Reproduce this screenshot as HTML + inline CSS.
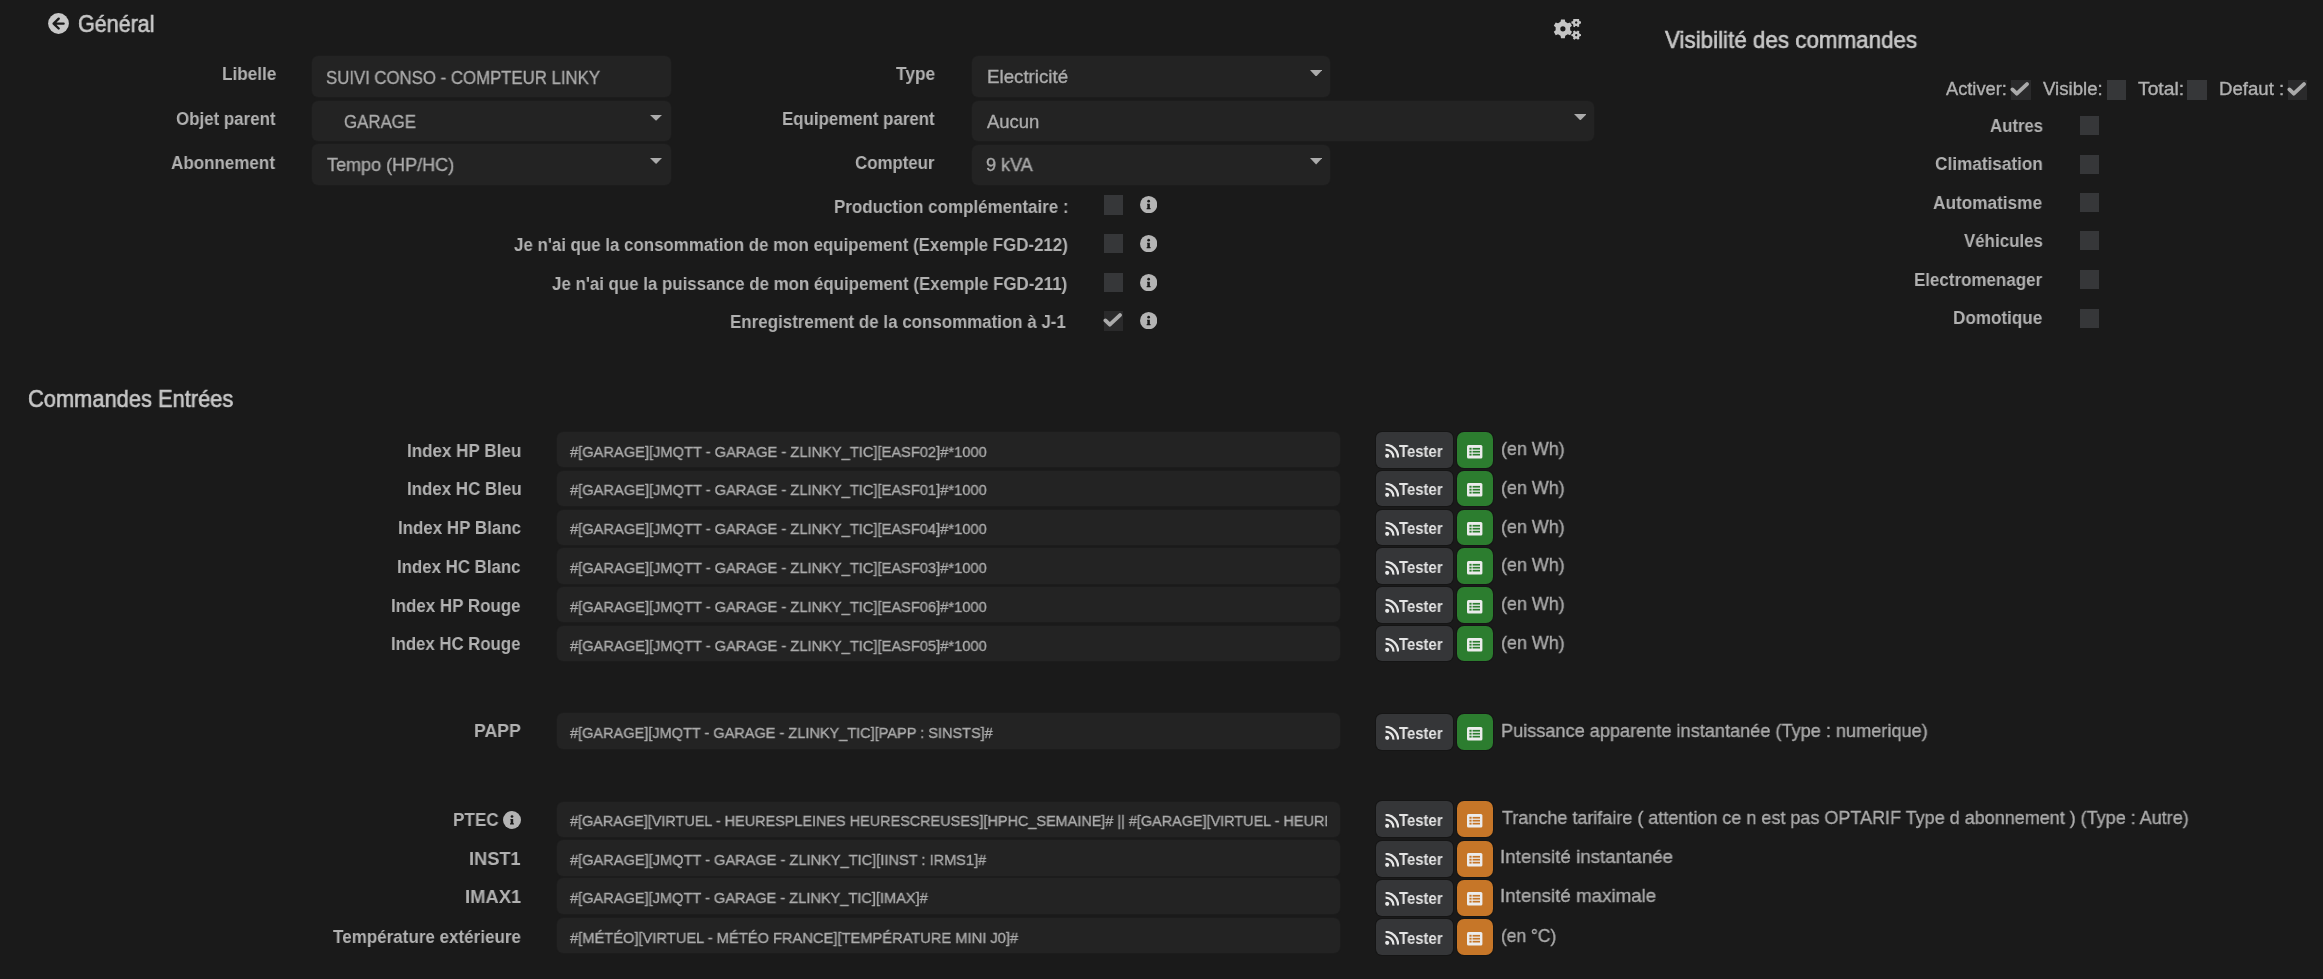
<!DOCTYPE html>
<html><head><meta charset="utf-8"><style>
html,body{margin:0;padding:0;background:#1a1a1a;width:2323px;height:979px;overflow:hidden}
body{position:relative;font-family:"Liberation Sans",sans-serif}
.t{position:absolute;white-space:nowrap;line-height:1;transform-origin:0 0;will-change:transform}
.r{position:absolute;display:block}
.clip{position:absolute;overflow:hidden}
#wrap{position:absolute;left:0;top:0;width:2323px;height:979px}
</style></head><body><div id="wrap">
<svg class="r" style="left:47.70px;top:13.20px" width="21" height="21" viewBox="0 0 21 21"><circle cx="10.5" cy="10.5" r="10.4" fill="#c8c8c8"/><path d="M15.6,10.6 H5.6 M10.7,5.7 L5.6,10.6 L10.7,15.5" fill="none" stroke="#1a1a1a" stroke-width="2.4" stroke-linecap="round" stroke-linejoin="round"/></svg>
<div class="t" style="left:77.72px;top:13.31px;font-size:23.26px;font-weight:normal;color:#c8c8c8;transform:scaleX(0.9248);-webkit-text-stroke:0.6px #c8c8c8">Général</div>
<svg class="r" style="left:1553.00px;top:19.00px" width="30" height="22" viewBox="0 0 30 22"><path d="M7.54,2.79 L8.00,0.39 L11.80,0.39 L12.26,2.79 L14.79,4.25 L17.10,3.45 L19.00,6.74 L17.15,8.34 L17.15,11.26 L19.00,12.86 L17.10,16.15 L14.79,15.35 L12.26,16.81 L11.80,19.21 L8.00,19.21 L7.54,16.81 L5.01,15.35 L2.70,16.15 L0.80,12.86 L2.65,11.26 L2.65,8.34 L0.80,6.74 L2.70,3.45 L5.01,4.25 Z M12.50,9.80 A2.6,2.6 0 1 0 7.30,9.80 A2.6,2.6 0 1 0 12.50,9.80 Z" fill="#c6c6c6" fill-rule="evenodd"/><g transform="rotate(30 23.2 -3.5)"></g><g transform="translate(18.2,-1.5) rotate(30 5 5)"><path d="M3.86,1.48 L4.08,0.19 L5.92,0.19 L6.14,1.48 L7.48,2.25 L8.71,1.80 L9.63,3.39 L8.62,4.23 L8.62,5.77 L9.63,6.61 L8.71,8.20 L7.48,7.75 L6.14,8.52 L5.92,9.81 L4.08,9.81 L3.86,8.52 L2.52,7.75 L1.29,8.20 L0.37,6.61 L1.38,5.77 L1.38,4.23 L0.37,3.39 L1.29,1.80 L2.52,2.25 Z M6.15,5.00 A1.15,1.15 0 1 0 3.85,5.00 A1.15,1.15 0 1 0 6.15,5.00 Z" fill="#c6c6c6" fill-rule="evenodd"/></g><g transform="translate(18.2,11.1) rotate(30 5 5)"><path d="M3.86,1.48 L4.08,0.19 L5.92,0.19 L6.14,1.48 L7.48,2.25 L8.71,1.80 L9.63,3.39 L8.62,4.23 L8.62,5.77 L9.63,6.61 L8.71,8.20 L7.48,7.75 L6.14,8.52 L5.92,9.81 L4.08,9.81 L3.86,8.52 L2.52,7.75 L1.29,8.20 L0.37,6.61 L1.38,5.77 L1.38,4.23 L0.37,3.39 L1.29,1.80 L2.52,2.25 Z M6.15,5.00 A1.15,1.15 0 1 0 3.85,5.00 A1.15,1.15 0 1 0 6.15,5.00 Z" fill="#c6c6c6" fill-rule="evenodd"/></g></svg>
<div class="t" style="left:1664.68px;top:28.51px;font-size:23.26px;font-weight:normal;color:#c8c8c8;transform:scaleX(0.9628);-webkit-text-stroke:0.6px #c8c8c8">Visibilité des commandes</div>
<div class="t" style="left:221.50px;top:64.81px;font-size:18.90px;font-weight:bold;color:#b1b1b1;transform:scaleX(0.9097);-webkit-text-stroke:0.0px #b1b1b1">Libelle</div>
<div class="t" style="left:175.92px;top:109.81px;font-size:18.90px;font-weight:bold;color:#b1b1b1;transform:scaleX(0.8944);-webkit-text-stroke:0.0px #b1b1b1">Objet parent</div>
<div class="t" style="left:171.49px;top:153.81px;font-size:18.90px;font-weight:bold;color:#b1b1b1;transform:scaleX(0.9007);-webkit-text-stroke:0.0px #b1b1b1">Abonnement</div>
<div class="r" style="left:312.00px;top:55.70px;width:359.00px;height:41.10px;background:#232323;border-radius:6px;box-shadow:0 0 0 1px #1c1c1c"></div>
<div class="r" style="left:312.00px;top:100.80px;width:359.00px;height:40.50px;background:#232323;border-radius:6px;box-shadow:0 0 0 1px #1c1c1c"></div>
<div class="r" style="left:312.00px;top:144.20px;width:359.00px;height:40.80px;background:#232323;border-radius:6px;box-shadow:0 0 0 1px #1c1c1c"></div>
<div class="t" style="left:326.16px;top:68.70px;font-size:18.31px;font-weight:normal;color:#ababab;transform:scaleX(0.9168);-webkit-text-stroke:0.35px #ababab">SUIVI CONSO - COMPTEUR LINKY</div>
<div class="t" style="left:343.56px;top:112.50px;font-size:18.31px;font-weight:normal;color:#ababab;transform:scaleX(0.9200);-webkit-text-stroke:0.35px #ababab">GARAGE</div>
<div class="t" style="left:327.14px;top:156.40px;font-size:18.31px;font-weight:normal;color:#ababab;transform:scaleX(0.9855);-webkit-text-stroke:0.35px #ababab">Tempo (HP/HC)</div>
<svg class="r" style="left:649.90px;top:115.00px" width="12.100000000000023" height="5.799999999999997" viewBox="0 0 12.100000000000023 5.799999999999997"><polygon points="0,0 12.100000000000023,0 6.050000000000011,5.799999999999997" fill="#ababab"/></svg>
<svg class="r" style="left:649.90px;top:158.00px" width="12.100000000000023" height="6" viewBox="0 0 12.100000000000023 6"><polygon points="0,0 12.100000000000023,0 6.050000000000011,6" fill="#ababab"/></svg>
<div class="t" style="left:896.43px;top:64.81px;font-size:18.90px;font-weight:bold;color:#b1b1b1;transform:scaleX(0.9148);-webkit-text-stroke:0.0px #b1b1b1">Type</div>
<div class="t" style="left:782.42px;top:110.41px;font-size:18.90px;font-weight:bold;color:#b1b1b1;transform:scaleX(0.8921);-webkit-text-stroke:0.0px #b1b1b1">Equipement parent</div>
<div class="t" style="left:855.43px;top:153.51px;font-size:18.90px;font-weight:bold;color:#b1b1b1;transform:scaleX(0.8919);-webkit-text-stroke:0.0px #b1b1b1">Compteur</div>
<div class="r" style="left:972.30px;top:56.20px;width:357.70px;height:40.40px;background:#232323;border-radius:6px;box-shadow:0 0 0 1px #1c1c1c"></div>
<div class="r" style="left:972.30px;top:100.70px;width:622.00px;height:40.10px;background:#232323;border-radius:6px;box-shadow:0 0 0 1px #1c1c1c"></div>
<div class="r" style="left:972.30px;top:144.60px;width:357.70px;height:40.40px;background:#232323;border-radius:6px;box-shadow:0 0 0 1px #1c1c1c"></div>
<div class="t" style="left:986.50px;top:68.00px;font-size:18.31px;font-weight:normal;color:#ababab;transform:scaleX(1.0220);-webkit-text-stroke:0.35px #ababab">Electricité</div>
<div class="t" style="left:987.00px;top:113.00px;font-size:18.31px;font-weight:normal;color:#ababab;transform:scaleX(1.0093);-webkit-text-stroke:0.35px #ababab">Aucun</div>
<div class="t" style="left:986.10px;top:156.40px;font-size:18.31px;font-weight:normal;color:#ababab;transform:scaleX(0.9846);-webkit-text-stroke:0.35px #ababab">9 kVA</div>
<svg class="r" style="left:1309.70px;top:69.60px" width="12.200000000000045" height="6.6000000000000085" viewBox="0 0 12.200000000000045 6.6000000000000085"><polygon points="0,0 12.200000000000045,0 6.100000000000023,6.6000000000000085" fill="#ababab"/></svg>
<svg class="r" style="left:1573.70px;top:113.60px" width="12.700000000000045" height="6.400000000000006" viewBox="0 0 12.700000000000045 6.400000000000006"><polygon points="0,0 12.700000000000045,0 6.350000000000023,6.400000000000006" fill="#ababab"/></svg>
<svg class="r" style="left:1309.70px;top:158.00px" width="12.200000000000045" height="6.5" viewBox="0 0 12.200000000000045 6.5"><polygon points="0,0 12.200000000000045,0 6.100000000000023,6.5" fill="#ababab"/></svg>
<div class="t" style="left:833.71px;top:196.76px;font-size:19.19px;font-weight:bold;color:#b1b1b1;transform:scaleX(0.8838);-webkit-text-stroke:0.0px #b1b1b1">Production complémentaire :</div>
<div class="r" style="left:1104.00px;top:195.00px;width:19.00px;height:19.60px;background:#363739;border-radius:0px;"></div>
<svg class="r" style="left:1140.04px;top:195.94px" width="17.32" height="17.32" viewBox="0 0 17.32 17.32"><circle cx="8.66" cy="8.66" r="8.66" fill="#b4b4b4"/><circle cx="8.66" cy="5.16" r="1.35" fill="#1a1a1a"/><path d="M7.0600000000000005,7.66 h2.8 v4.3 h0.7 v1.2 h-3.9 v-1.2 h0.7 v-3.1 h-0.3 z" fill="#1a1a1a"/></svg>
<div class="t" style="left:513.76px;top:234.86px;font-size:19.19px;font-weight:bold;color:#b1b1b1;transform:scaleX(0.8800);-webkit-text-stroke:0.0px #b1b1b1">Je n'ai que la consommation de mon equipement (Exemple FGD-212)</div>
<div class="r" style="left:1104.00px;top:233.80px;width:19.00px;height:19.60px;background:#363739;border-radius:0px;"></div>
<svg class="r" style="left:1140.04px;top:234.74px" width="17.32" height="17.32" viewBox="0 0 17.32 17.32"><circle cx="8.66" cy="8.66" r="8.66" fill="#b4b4b4"/><circle cx="8.66" cy="5.16" r="1.35" fill="#1a1a1a"/><path d="M7.0600000000000005,7.66 h2.8 v4.3 h0.7 v1.2 h-3.9 v-1.2 h0.7 v-3.1 h-0.3 z" fill="#1a1a1a"/></svg>
<div class="t" style="left:552.46px;top:273.56px;font-size:19.19px;font-weight:bold;color:#b1b1b1;transform:scaleX(0.8796);-webkit-text-stroke:0.0px #b1b1b1">Je n'ai que la puissance de mon équipement (Exemple FGD-211)</div>
<div class="r" style="left:1104.00px;top:272.60px;width:19.00px;height:19.60px;background:#363739;border-radius:0px;"></div>
<svg class="r" style="left:1140.04px;top:273.54px" width="17.32" height="17.32" viewBox="0 0 17.32 17.32"><circle cx="8.66" cy="8.66" r="8.66" fill="#b4b4b4"/><circle cx="8.66" cy="5.16" r="1.35" fill="#1a1a1a"/><path d="M7.0600000000000005,7.66 h2.8 v4.3 h0.7 v1.2 h-3.9 v-1.2 h0.7 v-3.1 h-0.3 z" fill="#1a1a1a"/></svg>
<div class="t" style="left:729.81px;top:311.76px;font-size:19.19px;font-weight:bold;color:#b1b1b1;transform:scaleX(0.8824);-webkit-text-stroke:0.0px #b1b1b1">Enregistrement de la consommation à J-1</div>
<div class="r" style="left:1104.00px;top:311.00px;width:19.00px;height:19.60px;background:#2a2a2b;border-radius:0px;"></div>
<svg class="r" style="left:1103.00px;top:311.00px" width="21" height="19.6" viewBox="0 0 21 19.6"><polyline points="2.4,9.4 6.8,13.7 17,4.1" fill="none" stroke="#ababab" stroke-width="3.8" stroke-linecap="round" stroke-linejoin="round"/></svg>
<svg class="r" style="left:1140.04px;top:311.94px" width="17.32" height="17.32" viewBox="0 0 17.32 17.32"><circle cx="8.66" cy="8.66" r="8.66" fill="#b4b4b4"/><circle cx="8.66" cy="5.16" r="1.35" fill="#1a1a1a"/><path d="M7.0600000000000005,7.66 h2.8 v4.3 h0.7 v1.2 h-3.9 v-1.2 h0.7 v-3.1 h-0.3 z" fill="#1a1a1a"/></svg>
<div class="t" style="left:1946.00px;top:79.74px;font-size:18.02px;font-weight:normal;color:#b1b1b1;transform:scaleX(1.0124);-webkit-text-stroke:0.35px #b1b1b1">Activer:</div>
<div class="t" style="left:2042.81px;top:79.74px;font-size:18.02px;font-weight:normal;color:#b1b1b1;transform:scaleX(1.0347);-webkit-text-stroke:0.35px #b1b1b1">Visible:</div>
<div class="t" style="left:2137.61px;top:79.74px;font-size:18.02px;font-weight:normal;color:#b1b1b1;transform:scaleX(1.0707);-webkit-text-stroke:0.35px #b1b1b1">Total:</div>
<div class="t" style="left:2218.51px;top:79.74px;font-size:18.02px;font-weight:normal;color:#b1b1b1;transform:scaleX(1.0330);-webkit-text-stroke:0.35px #b1b1b1">Defaut :</div>
<div class="r" style="left:2011.00px;top:80.00px;width:19.50px;height:19.50px;background:#2a2a2b;border-radius:0px;"></div>
<svg class="r" style="left:2010.00px;top:80.00px" width="21.5" height="19.5" viewBox="0 0 21.5 19.5"><polyline points="2.4,9.4 6.8,13.7 17,4.1" fill="none" stroke="#ababab" stroke-width="3.8" stroke-linecap="round" stroke-linejoin="round"/></svg>
<div class="r" style="left:2106.50px;top:80.00px;width:19.50px;height:19.50px;background:#363739;border-radius:0px;"></div>
<div class="r" style="left:2187.00px;top:80.00px;width:19.50px;height:19.50px;background:#363739;border-radius:0px;"></div>
<div class="r" style="left:2287.50px;top:80.00px;width:19.50px;height:19.50px;background:#2a2a2b;border-radius:0px;"></div>
<svg class="r" style="left:2286.50px;top:80.00px" width="21.5" height="19.5" viewBox="0 0 21.5 19.5"><polyline points="2.4,9.4 6.8,13.7 17,4.1" fill="none" stroke="#ababab" stroke-width="3.8" stroke-linecap="round" stroke-linejoin="round"/></svg>
<div class="t" style="left:1989.50px;top:116.61px;font-size:18.90px;font-weight:bold;color:#b1b1b1;transform:scaleX(0.8877);-webkit-text-stroke:0.0px #b1b1b1">Autres</div>
<div class="r" style="left:2079.70px;top:116.00px;width:19.00px;height:19.00px;background:#363739;border-radius:0px;"></div>
<div class="t" style="left:1935.11px;top:154.81px;font-size:18.90px;font-weight:bold;color:#b1b1b1;transform:scaleX(0.9095);-webkit-text-stroke:0.0px #b1b1b1">Climatisation</div>
<div class="r" style="left:2079.70px;top:154.80px;width:19.00px;height:19.00px;background:#363739;border-radius:0px;"></div>
<div class="t" style="left:1933.48px;top:193.71px;font-size:18.90px;font-weight:bold;color:#b1b1b1;transform:scaleX(0.9116);-webkit-text-stroke:0.0px #b1b1b1">Automatisme</div>
<div class="r" style="left:2079.70px;top:193.00px;width:19.00px;height:19.00px;background:#363739;border-radius:0px;"></div>
<div class="t" style="left:1963.83px;top:232.01px;font-size:18.90px;font-weight:bold;color:#b1b1b1;transform:scaleX(0.8935);-webkit-text-stroke:0.0px #b1b1b1">Véhicules</div>
<div class="r" style="left:2079.70px;top:231.30px;width:19.00px;height:19.00px;background:#363739;border-radius:0px;"></div>
<div class="t" style="left:1914.01px;top:271.01px;font-size:18.90px;font-weight:bold;color:#b1b1b1;transform:scaleX(0.8971);-webkit-text-stroke:0.0px #b1b1b1">Electromenager</div>
<div class="r" style="left:2079.70px;top:270.00px;width:19.00px;height:19.00px;background:#363739;border-radius:0px;"></div>
<div class="t" style="left:1953.30px;top:309.01px;font-size:18.90px;font-weight:bold;color:#b1b1b1;transform:scaleX(0.9044);-webkit-text-stroke:0.0px #b1b1b1">Domotique</div>
<div class="r" style="left:2079.70px;top:308.50px;width:19.00px;height:19.00px;background:#363739;border-radius:0px;"></div>
<div class="t" style="left:28.31px;top:388.41px;font-size:23.26px;font-weight:normal;color:#c8c8c8;transform:scaleX(0.9400);-webkit-text-stroke:0.6px #c8c8c8">Commandes Entrées</div>
<div class="r" style="left:557.00px;top:432.00px;width:782.60px;height:35.40px;background:#232323;border-radius:6px;box-shadow:0 0 0 1px #1c1c1c"></div>
<div class="t" style="left:407.21px;top:441.61px;font-size:18.90px;font-weight:bold;color:#b1b1b1;transform:scaleX(0.9014);-webkit-text-stroke:0.0px #b1b1b1">Index HP Bleu</div>
<div class="t" style="left:569.50px;top:443.88px;font-size:15.26px;font-weight:normal;color:#ababab;transform:scaleX(0.9609);-webkit-text-stroke:0.35px #ababab">#[GARAGE][JMQTT - GARAGE - ZLINKY_TIC][EASF02]#*1000</div>
<div class="r" style="left:1376.20px;top:432.00px;width:76.50px;height:35.60px;background:#353638;border-radius:6px;box-shadow:0 0 0 1px #151515"></div>
<svg class="r" style="left:1385.00px;top:444.30px" width="14" height="14" viewBox="0 0 14 14"><circle cx="2.2" cy="11.8" r="2.1" fill="#e6e6e6"/><path d="M0.6,5.6 A7.6,7.6 0 0 1 8.4,13.6" fill="none" stroke="#e6e6e6" stroke-width="2.3"/><path d="M0.6,0.9 A12.5,12.5 0 0 1 13.1,13.6" fill="none" stroke="#e6e6e6" stroke-width="2.3"/></svg>
<div class="t" style="left:1398.95px;top:443.69px;font-size:15.84px;font-weight:bold;color:#e4e4e4;transform:scaleX(0.9414);-webkit-text-stroke:0.0px #e4e4e4">Tester</div>
<div class="r" style="left:1457.20px;top:432.00px;width:35.40px;height:35.60px;background:#2c7d2f;border-radius:7px;box-shadow:0 0 0 1px #151515"></div>
<svg class="r" style="left:1467.10px;top:444.60px" width="16" height="14" viewBox="0 0 16 14"><rect x="0" y="0" width="15.4" height="13.4" rx="1.5" fill="#ececec"/><rect x="2.4" y="2.8" width="2.2" height="1.9" fill="#2c7d2f"/><rect x="2.4" y="5.75" width="2.2" height="1.9" fill="#2c7d2f"/><rect x="2.4" y="8.7" width="2.2" height="1.9" fill="#2c7d2f"/><rect x="5.6" y="2.9" width="7.4" height="1.7" fill="#2c7d2f"/><rect x="5.6" y="5.85" width="7.4" height="1.7" fill="#2c7d2f"/><rect x="5.6" y="8.8" width="7.4" height="1.7" fill="#2c7d2f"/></svg>
<div class="t" style="left:1500.92px;top:439.18px;font-size:19.04px;font-weight:normal;color:#ababab;transform:scaleX(0.9417);-webkit-text-stroke:0.35px #ababab">(en Wh)</div>
<div class="r" style="left:557.00px;top:470.60px;width:782.60px;height:35.40px;background:#232323;border-radius:6px;box-shadow:0 0 0 1px #1c1c1c"></div>
<div class="t" style="left:406.62px;top:480.21px;font-size:18.90px;font-weight:bold;color:#b1b1b1;transform:scaleX(0.8953);-webkit-text-stroke:0.0px #b1b1b1">Index HC Bleu</div>
<div class="t" style="left:569.50px;top:482.48px;font-size:15.26px;font-weight:normal;color:#ababab;transform:scaleX(0.9609);-webkit-text-stroke:0.35px #ababab">#[GARAGE][JMQTT - GARAGE - ZLINKY_TIC][EASF01]#*1000</div>
<div class="r" style="left:1376.20px;top:470.60px;width:76.50px;height:35.60px;background:#353638;border-radius:6px;box-shadow:0 0 0 1px #151515"></div>
<svg class="r" style="left:1385.00px;top:482.90px" width="14" height="14" viewBox="0 0 14 14"><circle cx="2.2" cy="11.8" r="2.1" fill="#e6e6e6"/><path d="M0.6,5.6 A7.6,7.6 0 0 1 8.4,13.6" fill="none" stroke="#e6e6e6" stroke-width="2.3"/><path d="M0.6,0.9 A12.5,12.5 0 0 1 13.1,13.6" fill="none" stroke="#e6e6e6" stroke-width="2.3"/></svg>
<div class="t" style="left:1398.95px;top:482.29px;font-size:15.84px;font-weight:bold;color:#e4e4e4;transform:scaleX(0.9414);-webkit-text-stroke:0.0px #e4e4e4">Tester</div>
<div class="r" style="left:1457.20px;top:470.60px;width:35.40px;height:35.60px;background:#2c7d2f;border-radius:7px;box-shadow:0 0 0 1px #151515"></div>
<svg class="r" style="left:1467.10px;top:483.20px" width="16" height="14" viewBox="0 0 16 14"><rect x="0" y="0" width="15.4" height="13.4" rx="1.5" fill="#ececec"/><rect x="2.4" y="2.8" width="2.2" height="1.9" fill="#2c7d2f"/><rect x="2.4" y="5.75" width="2.2" height="1.9" fill="#2c7d2f"/><rect x="2.4" y="8.7" width="2.2" height="1.9" fill="#2c7d2f"/><rect x="5.6" y="2.9" width="7.4" height="1.7" fill="#2c7d2f"/><rect x="5.6" y="5.85" width="7.4" height="1.7" fill="#2c7d2f"/><rect x="5.6" y="8.8" width="7.4" height="1.7" fill="#2c7d2f"/></svg>
<div class="t" style="left:1500.92px;top:477.78px;font-size:19.04px;font-weight:normal;color:#ababab;transform:scaleX(0.9417);-webkit-text-stroke:0.35px #ababab">(en Wh)</div>
<div class="r" style="left:557.00px;top:509.50px;width:782.60px;height:35.40px;background:#232323;border-radius:6px;box-shadow:0 0 0 1px #1c1c1c"></div>
<div class="t" style="left:397.71px;top:519.11px;font-size:18.90px;font-weight:bold;color:#b1b1b1;transform:scaleX(0.8961);-webkit-text-stroke:0.0px #b1b1b1">Index HP Blanc</div>
<div class="t" style="left:569.50px;top:521.38px;font-size:15.26px;font-weight:normal;color:#ababab;transform:scaleX(0.9609);-webkit-text-stroke:0.35px #ababab">#[GARAGE][JMQTT - GARAGE - ZLINKY_TIC][EASF04]#*1000</div>
<div class="r" style="left:1376.20px;top:509.50px;width:76.50px;height:35.60px;background:#353638;border-radius:6px;box-shadow:0 0 0 1px #151515"></div>
<svg class="r" style="left:1385.00px;top:521.80px" width="14" height="14" viewBox="0 0 14 14"><circle cx="2.2" cy="11.8" r="2.1" fill="#e6e6e6"/><path d="M0.6,5.6 A7.6,7.6 0 0 1 8.4,13.6" fill="none" stroke="#e6e6e6" stroke-width="2.3"/><path d="M0.6,0.9 A12.5,12.5 0 0 1 13.1,13.6" fill="none" stroke="#e6e6e6" stroke-width="2.3"/></svg>
<div class="t" style="left:1398.95px;top:521.19px;font-size:15.84px;font-weight:bold;color:#e4e4e4;transform:scaleX(0.9414);-webkit-text-stroke:0.0px #e4e4e4">Tester</div>
<div class="r" style="left:1457.20px;top:509.50px;width:35.40px;height:35.60px;background:#2c7d2f;border-radius:7px;box-shadow:0 0 0 1px #151515"></div>
<svg class="r" style="left:1467.10px;top:522.10px" width="16" height="14" viewBox="0 0 16 14"><rect x="0" y="0" width="15.4" height="13.4" rx="1.5" fill="#ececec"/><rect x="2.4" y="2.8" width="2.2" height="1.9" fill="#2c7d2f"/><rect x="2.4" y="5.75" width="2.2" height="1.9" fill="#2c7d2f"/><rect x="2.4" y="8.7" width="2.2" height="1.9" fill="#2c7d2f"/><rect x="5.6" y="2.9" width="7.4" height="1.7" fill="#2c7d2f"/><rect x="5.6" y="5.85" width="7.4" height="1.7" fill="#2c7d2f"/><rect x="5.6" y="8.8" width="7.4" height="1.7" fill="#2c7d2f"/></svg>
<div class="t" style="left:1500.92px;top:516.68px;font-size:19.04px;font-weight:normal;color:#ababab;transform:scaleX(0.9417);-webkit-text-stroke:0.35px #ababab">(en Wh)</div>
<div class="r" style="left:557.00px;top:548.30px;width:782.60px;height:35.40px;background:#232323;border-radius:6px;box-shadow:0 0 0 1px #1c1c1c"></div>
<div class="t" style="left:397.12px;top:557.91px;font-size:18.90px;font-weight:bold;color:#b1b1b1;transform:scaleX(0.8918);-webkit-text-stroke:0.0px #b1b1b1">Index HC Blanc</div>
<div class="t" style="left:569.50px;top:560.18px;font-size:15.26px;font-weight:normal;color:#ababab;transform:scaleX(0.9609);-webkit-text-stroke:0.35px #ababab">#[GARAGE][JMQTT - GARAGE - ZLINKY_TIC][EASF03]#*1000</div>
<div class="r" style="left:1376.20px;top:548.30px;width:76.50px;height:35.60px;background:#353638;border-radius:6px;box-shadow:0 0 0 1px #151515"></div>
<svg class="r" style="left:1385.00px;top:560.60px" width="14" height="14" viewBox="0 0 14 14"><circle cx="2.2" cy="11.8" r="2.1" fill="#e6e6e6"/><path d="M0.6,5.6 A7.6,7.6 0 0 1 8.4,13.6" fill="none" stroke="#e6e6e6" stroke-width="2.3"/><path d="M0.6,0.9 A12.5,12.5 0 0 1 13.1,13.6" fill="none" stroke="#e6e6e6" stroke-width="2.3"/></svg>
<div class="t" style="left:1398.95px;top:559.99px;font-size:15.84px;font-weight:bold;color:#e4e4e4;transform:scaleX(0.9414);-webkit-text-stroke:0.0px #e4e4e4">Tester</div>
<div class="r" style="left:1457.20px;top:548.30px;width:35.40px;height:35.60px;background:#2c7d2f;border-radius:7px;box-shadow:0 0 0 1px #151515"></div>
<svg class="r" style="left:1467.10px;top:560.90px" width="16" height="14" viewBox="0 0 16 14"><rect x="0" y="0" width="15.4" height="13.4" rx="1.5" fill="#ececec"/><rect x="2.4" y="2.8" width="2.2" height="1.9" fill="#2c7d2f"/><rect x="2.4" y="5.75" width="2.2" height="1.9" fill="#2c7d2f"/><rect x="2.4" y="8.7" width="2.2" height="1.9" fill="#2c7d2f"/><rect x="5.6" y="2.9" width="7.4" height="1.7" fill="#2c7d2f"/><rect x="5.6" y="5.85" width="7.4" height="1.7" fill="#2c7d2f"/><rect x="5.6" y="8.8" width="7.4" height="1.7" fill="#2c7d2f"/></svg>
<div class="t" style="left:1500.92px;top:555.48px;font-size:19.04px;font-weight:normal;color:#ababab;transform:scaleX(0.9417);-webkit-text-stroke:0.35px #ababab">(en Wh)</div>
<div class="r" style="left:557.00px;top:587.10px;width:782.60px;height:35.40px;background:#232323;border-radius:6px;box-shadow:0 0 0 1px #1c1c1c"></div>
<div class="t" style="left:391.41px;top:596.71px;font-size:18.90px;font-weight:bold;color:#b1b1b1;transform:scaleX(0.8963);-webkit-text-stroke:0.0px #b1b1b1">Index HP Rouge</div>
<div class="t" style="left:569.50px;top:598.98px;font-size:15.26px;font-weight:normal;color:#ababab;transform:scaleX(0.9609);-webkit-text-stroke:0.35px #ababab">#[GARAGE][JMQTT - GARAGE - ZLINKY_TIC][EASF06]#*1000</div>
<div class="r" style="left:1376.20px;top:587.10px;width:76.50px;height:35.60px;background:#353638;border-radius:6px;box-shadow:0 0 0 1px #151515"></div>
<svg class="r" style="left:1385.00px;top:599.40px" width="14" height="14" viewBox="0 0 14 14"><circle cx="2.2" cy="11.8" r="2.1" fill="#e6e6e6"/><path d="M0.6,5.6 A7.6,7.6 0 0 1 8.4,13.6" fill="none" stroke="#e6e6e6" stroke-width="2.3"/><path d="M0.6,0.9 A12.5,12.5 0 0 1 13.1,13.6" fill="none" stroke="#e6e6e6" stroke-width="2.3"/></svg>
<div class="t" style="left:1398.95px;top:598.79px;font-size:15.84px;font-weight:bold;color:#e4e4e4;transform:scaleX(0.9414);-webkit-text-stroke:0.0px #e4e4e4">Tester</div>
<div class="r" style="left:1457.20px;top:587.10px;width:35.40px;height:35.60px;background:#2c7d2f;border-radius:7px;box-shadow:0 0 0 1px #151515"></div>
<svg class="r" style="left:1467.10px;top:599.70px" width="16" height="14" viewBox="0 0 16 14"><rect x="0" y="0" width="15.4" height="13.4" rx="1.5" fill="#ececec"/><rect x="2.4" y="2.8" width="2.2" height="1.9" fill="#2c7d2f"/><rect x="2.4" y="5.75" width="2.2" height="1.9" fill="#2c7d2f"/><rect x="2.4" y="8.7" width="2.2" height="1.9" fill="#2c7d2f"/><rect x="5.6" y="2.9" width="7.4" height="1.7" fill="#2c7d2f"/><rect x="5.6" y="5.85" width="7.4" height="1.7" fill="#2c7d2f"/><rect x="5.6" y="8.8" width="7.4" height="1.7" fill="#2c7d2f"/></svg>
<div class="t" style="left:1500.92px;top:594.28px;font-size:19.04px;font-weight:normal;color:#ababab;transform:scaleX(0.9417);-webkit-text-stroke:0.35px #ababab">(en Wh)</div>
<div class="r" style="left:557.00px;top:625.80px;width:782.60px;height:35.40px;background:#232323;border-radius:6px;box-shadow:0 0 0 1px #1c1c1c"></div>
<div class="t" style="left:391.43px;top:635.41px;font-size:18.90px;font-weight:bold;color:#b1b1b1;transform:scaleX(0.8869);-webkit-text-stroke:0.0px #b1b1b1">Index HC Rouge</div>
<div class="t" style="left:569.50px;top:637.68px;font-size:15.26px;font-weight:normal;color:#ababab;transform:scaleX(0.9609);-webkit-text-stroke:0.35px #ababab">#[GARAGE][JMQTT - GARAGE - ZLINKY_TIC][EASF05]#*1000</div>
<div class="r" style="left:1376.20px;top:625.80px;width:76.50px;height:35.60px;background:#353638;border-radius:6px;box-shadow:0 0 0 1px #151515"></div>
<svg class="r" style="left:1385.00px;top:638.10px" width="14" height="14" viewBox="0 0 14 14"><circle cx="2.2" cy="11.8" r="2.1" fill="#e6e6e6"/><path d="M0.6,5.6 A7.6,7.6 0 0 1 8.4,13.6" fill="none" stroke="#e6e6e6" stroke-width="2.3"/><path d="M0.6,0.9 A12.5,12.5 0 0 1 13.1,13.6" fill="none" stroke="#e6e6e6" stroke-width="2.3"/></svg>
<div class="t" style="left:1398.95px;top:637.49px;font-size:15.84px;font-weight:bold;color:#e4e4e4;transform:scaleX(0.9414);-webkit-text-stroke:0.0px #e4e4e4">Tester</div>
<div class="r" style="left:1457.20px;top:625.80px;width:35.40px;height:35.60px;background:#2c7d2f;border-radius:7px;box-shadow:0 0 0 1px #151515"></div>
<svg class="r" style="left:1467.10px;top:638.40px" width="16" height="14" viewBox="0 0 16 14"><rect x="0" y="0" width="15.4" height="13.4" rx="1.5" fill="#ececec"/><rect x="2.4" y="2.8" width="2.2" height="1.9" fill="#2c7d2f"/><rect x="2.4" y="5.75" width="2.2" height="1.9" fill="#2c7d2f"/><rect x="2.4" y="8.7" width="2.2" height="1.9" fill="#2c7d2f"/><rect x="5.6" y="2.9" width="7.4" height="1.7" fill="#2c7d2f"/><rect x="5.6" y="5.85" width="7.4" height="1.7" fill="#2c7d2f"/><rect x="5.6" y="8.8" width="7.4" height="1.7" fill="#2c7d2f"/></svg>
<div class="t" style="left:1500.92px;top:632.98px;font-size:19.04px;font-weight:normal;color:#ababab;transform:scaleX(0.9417);-webkit-text-stroke:0.35px #ababab">(en Wh)</div>
<div class="r" style="left:557.00px;top:713.20px;width:782.60px;height:35.80px;background:#232323;border-radius:6px;box-shadow:0 0 0 1px #1c1c1c"></div>
<div class="t" style="left:474.16px;top:722.31px;font-size:18.90px;font-weight:bold;color:#b1b1b1;transform:scaleX(0.9355);-webkit-text-stroke:0.0px #b1b1b1">PAPP</div>
<div class="t" style="left:569.50px;top:724.98px;font-size:15.26px;font-weight:normal;color:#ababab;transform:scaleX(0.9521);-webkit-text-stroke:0.35px #ababab">#[GARAGE][JMQTT - GARAGE - ZLINKY_TIC][PAPP : SINSTS]#</div>
<div class="r" style="left:1376.20px;top:714.10px;width:76.50px;height:36.00px;background:#353638;border-radius:6px;box-shadow:0 0 0 1px #151515"></div>
<svg class="r" style="left:1385.00px;top:726.40px" width="14" height="14" viewBox="0 0 14 14"><circle cx="2.2" cy="11.8" r="2.1" fill="#e6e6e6"/><path d="M0.6,5.6 A7.6,7.6 0 0 1 8.4,13.6" fill="none" stroke="#e6e6e6" stroke-width="2.3"/><path d="M0.6,0.9 A12.5,12.5 0 0 1 13.1,13.6" fill="none" stroke="#e6e6e6" stroke-width="2.3"/></svg>
<div class="t" style="left:1398.95px;top:725.79px;font-size:15.84px;font-weight:bold;color:#e4e4e4;transform:scaleX(0.9414);-webkit-text-stroke:0.0px #e4e4e4">Tester</div>
<div class="r" style="left:1457.20px;top:714.10px;width:35.40px;height:36.00px;background:#2c7d2f;border-radius:7px;box-shadow:0 0 0 1px #151515"></div>
<svg class="r" style="left:1467.10px;top:726.70px" width="16" height="14" viewBox="0 0 16 14"><rect x="0" y="0" width="15.4" height="13.4" rx="1.5" fill="#ececec"/><rect x="2.4" y="2.8" width="2.2" height="1.9" fill="#2c7d2f"/><rect x="2.4" y="5.75" width="2.2" height="1.9" fill="#2c7d2f"/><rect x="2.4" y="8.7" width="2.2" height="1.9" fill="#2c7d2f"/><rect x="5.6" y="2.9" width="7.4" height="1.7" fill="#2c7d2f"/><rect x="5.6" y="5.85" width="7.4" height="1.7" fill="#2c7d2f"/><rect x="5.6" y="8.8" width="7.4" height="1.7" fill="#2c7d2f"/></svg>
<div class="t" style="left:1500.55px;top:721.28px;font-size:19.04px;font-weight:normal;color:#ababab;transform:scaleX(0.9535);-webkit-text-stroke:0.35px #ababab">Puissance apparente instantanée (Type : numerique)</div>
<div class="r" style="left:557.00px;top:801.50px;width:782.60px;height:35.80px;background:#232323;border-radius:6px;box-shadow:0 0 0 1px #1c1c1c"></div>
<div class="t" style="left:452.50px;top:811.21px;font-size:18.90px;font-weight:bold;color:#b1b1b1;transform:scaleX(0.9055);-webkit-text-stroke:0.0px #b1b1b1">PTEC</div>
<svg class="r" style="left:502.60px;top:810.50px" width="18" height="18" viewBox="0 0 18 18"><circle cx="9" cy="9" r="9" fill="#b4b4b4"/><circle cx="9" cy="5.5" r="1.35" fill="#1a1a1a"/><path d="M7.4,8.0 h2.8 v4.3 h0.7 v1.2 h-3.9 v-1.2 h0.7 v-3.1 h-0.3 z" fill="#1a1a1a"/></svg>
<div class="clip" style="left:557px;top:801.5px;width:770px;height:36.0px">
<div class="t" style="left:12.50px;top:11.28px;font-size:15.26px;font-weight:normal;color:#ababab;transform:scaleX(0.9456);-webkit-text-stroke:0.35px #ababab">#[GARAGE][VIRTUEL - HEURESPLEINES HEURESCREUSES][HPHC_SEMAINE]# || #[GARAGE][VIRTUEL - HEURESPLEINES HEURESCREUSES][HPHC_WEEKEND]#</div>
</div>
<div class="r" style="left:1376.20px;top:801.20px;width:76.50px;height:36.00px;background:#353638;border-radius:6px;box-shadow:0 0 0 1px #151515"></div>
<svg class="r" style="left:1385.00px;top:813.50px" width="14" height="14" viewBox="0 0 14 14"><circle cx="2.2" cy="11.8" r="2.1" fill="#e6e6e6"/><path d="M0.6,5.6 A7.6,7.6 0 0 1 8.4,13.6" fill="none" stroke="#e6e6e6" stroke-width="2.3"/><path d="M0.6,0.9 A12.5,12.5 0 0 1 13.1,13.6" fill="none" stroke="#e6e6e6" stroke-width="2.3"/></svg>
<div class="t" style="left:1398.95px;top:812.89px;font-size:15.84px;font-weight:bold;color:#e4e4e4;transform:scaleX(0.9414);-webkit-text-stroke:0.0px #e4e4e4">Tester</div>
<div class="r" style="left:1457.20px;top:801.20px;width:35.40px;height:36.00px;background:#c67628;border-radius:7px;box-shadow:0 0 0 1px #151515"></div>
<svg class="r" style="left:1467.10px;top:813.80px" width="16" height="14" viewBox="0 0 16 14"><rect x="0" y="0" width="15.4" height="13.4" rx="1.5" fill="#ececec"/><rect x="2.4" y="2.8" width="2.2" height="1.9" fill="#c67628"/><rect x="2.4" y="5.75" width="2.2" height="1.9" fill="#c67628"/><rect x="2.4" y="8.7" width="2.2" height="1.9" fill="#c67628"/><rect x="5.6" y="2.9" width="7.4" height="1.7" fill="#c67628"/><rect x="5.6" y="5.85" width="7.4" height="1.7" fill="#c67628"/><rect x="5.6" y="8.8" width="7.4" height="1.7" fill="#c67628"/></svg>
<div class="t" style="left:1501.64px;top:808.38px;font-size:19.04px;font-weight:normal;color:#ababab;transform:scaleX(0.9454);-webkit-text-stroke:0.35px #ababab">Tranche tarifaire ( attention ce n est pas OPTARIF Type d abonnement ) (Type : Autre)</div>
<div class="r" style="left:557.00px;top:840.00px;width:782.60px;height:35.80px;background:#232323;border-radius:6px;box-shadow:0 0 0 1px #1c1c1c"></div>
<div class="t" style="left:469.13px;top:849.81px;font-size:18.90px;font-weight:bold;color:#b1b1b1;transform:scaleX(0.9638);-webkit-text-stroke:0.0px #b1b1b1">INST1</div>
<div class="t" style="left:569.50px;top:851.88px;font-size:15.26px;font-weight:normal;color:#ababab;transform:scaleX(0.9569);-webkit-text-stroke:0.35px #ababab">#[GARAGE][JMQTT - GARAGE - ZLINKY_TIC][IINST : IRMS1]#</div>
<div class="r" style="left:1376.20px;top:840.50px;width:76.50px;height:36.00px;background:#353638;border-radius:6px;box-shadow:0 0 0 1px #151515"></div>
<svg class="r" style="left:1385.00px;top:852.80px" width="14" height="14" viewBox="0 0 14 14"><circle cx="2.2" cy="11.8" r="2.1" fill="#e6e6e6"/><path d="M0.6,5.6 A7.6,7.6 0 0 1 8.4,13.6" fill="none" stroke="#e6e6e6" stroke-width="2.3"/><path d="M0.6,0.9 A12.5,12.5 0 0 1 13.1,13.6" fill="none" stroke="#e6e6e6" stroke-width="2.3"/></svg>
<div class="t" style="left:1398.95px;top:852.19px;font-size:15.84px;font-weight:bold;color:#e4e4e4;transform:scaleX(0.9414);-webkit-text-stroke:0.0px #e4e4e4">Tester</div>
<div class="r" style="left:1457.20px;top:840.50px;width:35.40px;height:36.00px;background:#c67628;border-radius:7px;box-shadow:0 0 0 1px #151515"></div>
<svg class="r" style="left:1467.10px;top:853.10px" width="16" height="14" viewBox="0 0 16 14"><rect x="0" y="0" width="15.4" height="13.4" rx="1.5" fill="#ececec"/><rect x="2.4" y="2.8" width="2.2" height="1.9" fill="#c67628"/><rect x="2.4" y="5.75" width="2.2" height="1.9" fill="#c67628"/><rect x="2.4" y="8.7" width="2.2" height="1.9" fill="#c67628"/><rect x="5.6" y="2.9" width="7.4" height="1.7" fill="#c67628"/><rect x="5.6" y="5.85" width="7.4" height="1.7" fill="#c67628"/><rect x="5.6" y="8.8" width="7.4" height="1.7" fill="#c67628"/></svg>
<div class="t" style="left:1500.31px;top:847.38px;font-size:19.04px;font-weight:normal;color:#ababab;transform:scaleX(0.9851);-webkit-text-stroke:0.35px #ababab">Intensité instantanée</div>
<div class="r" style="left:557.00px;top:878.30px;width:782.60px;height:35.80px;background:#232323;border-radius:6px;box-shadow:0 0 0 1px #1c1c1c"></div>
<div class="t" style="left:464.61px;top:888.21px;font-size:18.90px;font-weight:bold;color:#b1b1b1;transform:scaleX(0.9726);-webkit-text-stroke:0.0px #b1b1b1">IMAX1</div>
<div class="t" style="left:569.50px;top:889.68px;font-size:15.26px;font-weight:normal;color:#ababab;transform:scaleX(0.9560);-webkit-text-stroke:0.35px #ababab">#[GARAGE][JMQTT - GARAGE - ZLINKY_TIC][IMAX]#</div>
<div class="r" style="left:1376.20px;top:879.80px;width:76.50px;height:36.00px;background:#353638;border-radius:6px;box-shadow:0 0 0 1px #151515"></div>
<svg class="r" style="left:1385.00px;top:892.10px" width="14" height="14" viewBox="0 0 14 14"><circle cx="2.2" cy="11.8" r="2.1" fill="#e6e6e6"/><path d="M0.6,5.6 A7.6,7.6 0 0 1 8.4,13.6" fill="none" stroke="#e6e6e6" stroke-width="2.3"/><path d="M0.6,0.9 A12.5,12.5 0 0 1 13.1,13.6" fill="none" stroke="#e6e6e6" stroke-width="2.3"/></svg>
<div class="t" style="left:1398.95px;top:891.49px;font-size:15.84px;font-weight:bold;color:#e4e4e4;transform:scaleX(0.9414);-webkit-text-stroke:0.0px #e4e4e4">Tester</div>
<div class="r" style="left:1457.20px;top:879.80px;width:35.40px;height:36.00px;background:#c67628;border-radius:7px;box-shadow:0 0 0 1px #151515"></div>
<svg class="r" style="left:1467.10px;top:892.40px" width="16" height="14" viewBox="0 0 16 14"><rect x="0" y="0" width="15.4" height="13.4" rx="1.5" fill="#ececec"/><rect x="2.4" y="2.8" width="2.2" height="1.9" fill="#c67628"/><rect x="2.4" y="5.75" width="2.2" height="1.9" fill="#c67628"/><rect x="2.4" y="8.7" width="2.2" height="1.9" fill="#c67628"/><rect x="5.6" y="2.9" width="7.4" height="1.7" fill="#c67628"/><rect x="5.6" y="5.85" width="7.4" height="1.7" fill="#c67628"/><rect x="5.6" y="8.8" width="7.4" height="1.7" fill="#c67628"/></svg>
<div class="t" style="left:1500.31px;top:886.18px;font-size:19.04px;font-weight:normal;color:#ababab;transform:scaleX(0.9844);-webkit-text-stroke:0.35px #ababab">Intensité maximale</div>
<div class="r" style="left:557.00px;top:917.60px;width:782.60px;height:35.80px;background:#232323;border-radius:6px;box-shadow:0 0 0 1px #1c1c1c"></div>
<div class="t" style="left:332.83px;top:927.51px;font-size:18.90px;font-weight:bold;color:#b1b1b1;transform:scaleX(0.9011);-webkit-text-stroke:0.0px #b1b1b1">Température extérieure</div>
<div class="t" style="left:569.50px;top:929.78px;font-size:15.26px;font-weight:normal;color:#ababab;transform:scaleX(0.9621);-webkit-text-stroke:0.35px #ababab">#[MÉTÉO][VIRTUEL - MÉTÉO FRANCE][TEMPÉRATURE MINI J0]#</div>
<div class="r" style="left:1376.20px;top:919.10px;width:76.50px;height:36.00px;background:#353638;border-radius:6px;box-shadow:0 0 0 1px #151515"></div>
<svg class="r" style="left:1385.00px;top:931.40px" width="14" height="14" viewBox="0 0 14 14"><circle cx="2.2" cy="11.8" r="2.1" fill="#e6e6e6"/><path d="M0.6,5.6 A7.6,7.6 0 0 1 8.4,13.6" fill="none" stroke="#e6e6e6" stroke-width="2.3"/><path d="M0.6,0.9 A12.5,12.5 0 0 1 13.1,13.6" fill="none" stroke="#e6e6e6" stroke-width="2.3"/></svg>
<div class="t" style="left:1398.95px;top:930.79px;font-size:15.84px;font-weight:bold;color:#e4e4e4;transform:scaleX(0.9414);-webkit-text-stroke:0.0px #e4e4e4">Tester</div>
<div class="r" style="left:1457.20px;top:919.10px;width:35.40px;height:36.00px;background:#c67628;border-radius:7px;box-shadow:0 0 0 1px #151515"></div>
<svg class="r" style="left:1467.10px;top:931.70px" width="16" height="14" viewBox="0 0 16 14"><rect x="0" y="0" width="15.4" height="13.4" rx="1.5" fill="#ececec"/><rect x="2.4" y="2.8" width="2.2" height="1.9" fill="#c67628"/><rect x="2.4" y="5.75" width="2.2" height="1.9" fill="#c67628"/><rect x="2.4" y="8.7" width="2.2" height="1.9" fill="#c67628"/><rect x="5.6" y="2.9" width="7.4" height="1.7" fill="#c67628"/><rect x="5.6" y="5.85" width="7.4" height="1.7" fill="#c67628"/><rect x="5.6" y="8.8" width="7.4" height="1.7" fill="#c67628"/></svg>
<div class="t" style="left:1500.96px;top:926.28px;font-size:19.04px;font-weight:normal;color:#ababab;transform:scaleX(0.9114);-webkit-text-stroke:0.35px #ababab">(en °C)</div>
</div></body></html>
